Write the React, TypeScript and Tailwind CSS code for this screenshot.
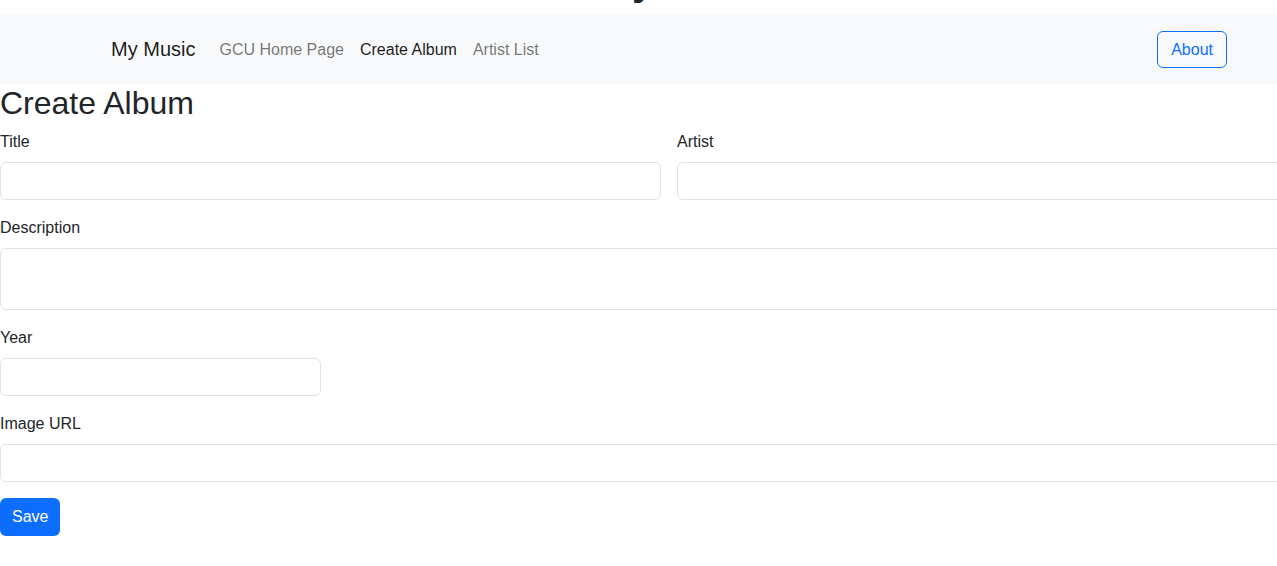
export default function App() {
  const font = { fontFamily: '"Liberation Sans", Arial, sans-serif' };
  return (
    <div className="w-full overflow-hidden bg-white text-[#212529]" style={font}>
      <div className="w-[1338px]">
        {/* Title cut off at the top of the page */}
        <div className="h-[14px] overflow-hidden">
          <div className="ml-[632px] mt-[-39px] text-[40px] leading-[40px] font-bold">y</div>
        </div>

        {/* Navbar */}
        <nav className="h-[70px] bg-[#f8f9fa]">
          <div className="mx-auto flex h-full w-[1140px] items-center px-3">
            <a className="mr-4 text-[20px] leading-[30px] text-black/90">My Music</a>
            <ul className="flex pt-[2px] text-[16px] leading-6">
              <li className="px-2 text-black/55">GCU Home Page</li>
              <li className="px-2 text-black/90">Create Album</li>
              <li className="px-2 text-black/55">Artist List</li>
            </ul>
            <button className="ml-auto h-[37px] rounded-[6px] border border-[#0d6efd] px-[13px] pt-[1px] text-[16px] text-[#0d6efd]">
              About
            </button>
          </div>
        </nav>

        {/* Form */}
        <div>
          <h2 className="mb-2 pt-[1px] text-[32px] leading-[37px]">Create Album</h2>
          <div className="grid grid-cols-2 gap-x-4">
            <div className="mb-4">
              <label className="mb-2 block text-[16px] leading-6">Title</label>
              <input className="block h-[38px] w-full rounded-[6px] border border-[#dee2e6] px-3" />
            </div>
            <div className="mb-4">
              <label className="mb-2 block text-[16px] leading-6">Artist</label>
              <input className="block h-[38px] w-full rounded-[6px] border border-[#dee2e6] px-3" />
            </div>
          </div>
          <div className="mb-4">
            <label className="mb-2 block text-[16px] leading-6">Description</label>
            <textarea className="block h-[62px] w-full resize-none rounded-[6px] border border-[#dee2e6] px-3" />
          </div>
          <div className="mb-4">
            <label className="mb-2 block text-[16px] leading-6">Year</label>
            <input className="block h-[38px] w-[321px] rounded-[6px] border border-[#dee2e6] px-3" />
          </div>
          <div className="mb-4">
            <label className="mb-2 block text-[16px] leading-6">Image URL</label>
            <input className="block h-[38px] w-full rounded-[6px] border border-[#dee2e6] px-3" />
          </div>
          <button className="h-[38px] rounded-[6px] bg-[#0d6efd] px-3 text-[16px] text-white">Save</button>
          <div className="h-[30px]" />
        </div>
      </div>
    </div>
  );
}
